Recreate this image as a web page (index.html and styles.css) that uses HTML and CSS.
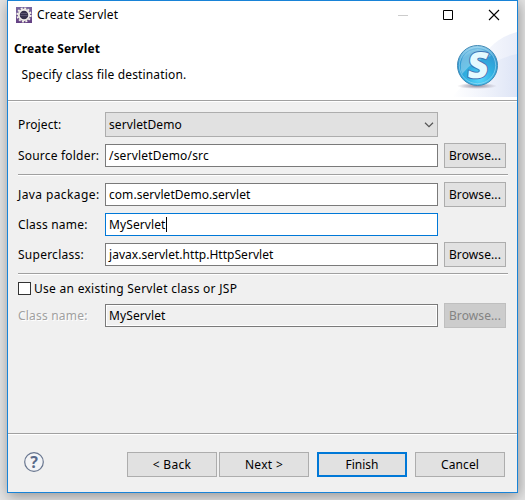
FILE: index.html
```html
<!DOCTYPE html>
<html lang="en">
<head>
<meta charset="utf-8">
<title>Create Servlet</title>
<link rel="stylesheet" href="styles.css">
</head>
<body>
<div class="dialog">
  <header class="header">
    <svg class="banner" width="72" height="68" viewBox="0 0 72 68">
      <defs>
        <linearGradient id="wave" x1="0" y1="0.5" x2="1" y2="0.5"><stop offset="0" stop-color="#fff"/><stop offset="1" stop-color="#e9edf9"/></linearGradient>
        <linearGradient id="wave2" x1="0" y1="0" x2="1" y2="0"><stop offset="0" stop-color="#fff"/><stop offset=".5" stop-color="#f0f3fb"/><stop offset="1" stop-color="#dee5f6"/></linearGradient>
        <radialGradient id="ball" cx=".55" cy=".82" r=".85"><stop offset="0" stop-color="#58d8fc"/><stop offset=".4" stop-color="#2fb0e2"/><stop offset=".75" stop-color="#3099d2"/><stop offset="1" stop-color="#b4e0f3"/></radialGradient>
        <radialGradient id="shade"><stop offset="0" stop-color="#938c9c"/><stop offset="1" stop-color="#938c9c" stop-opacity="0"/></radialGradient>
      </defs>
      <path d="M72 2C49 8 42 21 30 37L18 67H72Z" fill="url(#wave)"/>
      <path d="M72 24C48 29 29 43 7 67H72Z" fill="url(#wave2)"/>
      <ellipse cx="32" cy="56" rx="20" ry="3" fill="url(#shade)"/>
      <circle cx="32.5" cy="35.5" r="20" fill="url(#ball)" stroke="#4189b5"/>
      <circle cx="32.5" cy="35.5" r="18.2" fill="none" stroke="#a6dcf3" stroke-opacity=".6"/>
      <path d="M18 27A17 17 0 0 1 46 26Q29 29 17 44Q14 35 18 27Z" fill="#bce7f6" opacity=".45"/>
      <text class="logo-letter" transform="translate(32 48.4) skewX(-6)" text-anchor="middle">S</text>
    </svg>
    <div class="titlebar">
      <svg class="app-icon" width="16" height="16" viewBox="0 0 16 16">
        <defs><linearGradient id="app" x2="0" y2="1"><stop stop-color="#7968a0"/><stop offset="1" stop-color="#644083"/></linearGradient></defs>
        <path d="M0 0H16V16H0Z" fill="url(#app)"/>
        <circle cx="8" cy="8" r="6.7" fill="none" stroke="#f3f1e8" stroke-width="1.8" stroke-dasharray="2 1.508"/>
        <circle cx="8" cy="8" r="5.2" fill="#35304a" stroke="#efede6" stroke-width="1.9"/>
        <path d="M4.8 6.5H11.2M4.4 8.5H11.6" stroke="#5b5570"/>
      </svg>
      <span class="caption">Create Servlet</span>
      <svg class="controls" width="102" height="12" viewBox="0 0 102 12" fill="none">
        <path d="M0 6.5H10" stroke="#ccc"/>
        <path d="M45.5 1.5H54.5V10.5H45.5Z" stroke="#000"/>
        <path d="M91 1L101 11M101 1L91 11" stroke="#000" stroke-width="1.1"/>
      </svg>
    </div>
    <h1 class="title">Create Servlet</h1>
    <p class="subtitle">Specify class file destination.</p>
  </header>

  <main class="form">
    <div class="row combo-row">
      <label class="label l-project">Project:</label>
      <div class="field combo"><span class="v-demo">servletDemo</span>
        <svg width="10" height="6" viewBox="0 0 10 6" fill="none"><path d="M1 .8L5 4.7L9 .8" stroke="#555" stroke-width="1.2"/></svg>
      </div>
    </div>
    <div class="row source-row">
      <label class="label l-source">Source folder:</label>
      <div class="field"><span class="v-source">/servletDemo/src</span></div>
      <button class="button browse"><span>Browse...</span></button>
    </div>
    <div class="rule"></div>
    <div class="row package-row">
      <label class="label l-package">Java package:</label>
      <div class="field"><span class="v-package">com.servletDemo.servlet</span></div>
      <button class="button browse"><span>Browse...</span></button>
    </div>
    <div class="row class-row">
      <label class="label l-class">Class name:</label>
      <div class="field focused"><span class="v-class">MyServlet</span><i class="caret"></i></div>
    </div>
    <div class="row super-row">
      <label class="label l-super">Superclass:</label>
      <div class="field"><span class="v-super">javax.servlet.http.HttpServlet</span></div>
      <button class="button browse"><span>Browse...</span></button>
    </div>
    <div class="rule"></div>
    <div class="check-row"><i class="checkbox"></i><span class="check-label">Use an existing Servlet class or JSP</span></div>
    <div class="row existing-row">
      <label class="label l-class off">Class name:</label>
      <div class="field readonly"><span class="v-class">MyServlet</span></div>
      <button class="button browse disabled"><span>Browse...</span></button>
    </div>
  </main>

  <footer class="footer">
    <svg class="help" width="20" height="20" viewBox="0 0 20 20">
      <circle cx="10" cy="10" r="9.3" fill="#f3f4f6" stroke="#68768f" stroke-width="1.2"/>
      <text class="help-mark" x="10" y="16" text-anchor="middle">?</text>
    </svg>
    <button class="button action">&lt; Back</button>
    <button class="button action next">Next &gt;</button>
    <button class="button action primary">Finish</button>
    <button class="button action cancel">Cancel</button>
  </footer>
</div>
</body>
</html>
```
FILE: styles.css
```css
* { box-sizing: border-box; }
html { height: 500px; overflow: hidden; }
body {
  margin: 0; height: 500px; padding-left: 7px; overflow: hidden;
  background: #e4e4e4; color: #000;
  font: 12px/16px "Noto Sans", "Open Sans", sans-serif;
}
span, h1, p { white-space: nowrap; }
.dialog {
  width: 511px; height: 493px; display: flex; flex-direction: column;
  border: 1px solid #1883d7; background: #f0f0f0;
  box-shadow: 1px 3px 13px rgba(0, 0, 0, .36);
}
.header {
  position: relative; height: 101px; background: #fff;
  border-bottom: 1px solid #fff; box-shadow: inset 0 -1px #a0a0a0;
}
.banner { position: absolute; right: 0; top: 29px; }
.logo-letter { font: 800 36px "Open Sans", sans-serif; fill: #e4faff; stroke: #3f75b4; stroke-width: 2; stroke-linejoin: round; paint-order: stroke; }
.titlebar { position: relative; display: flex; align-items: center; height: 28px; padding: 0 17px 0 8px; }
.app-icon { margin-right: 5px; }
.caption { letter-spacing: .18px; }
.controls { margin-left: auto; }
.title { margin: 12px 0 0 6px; font-size: 12px; line-height: 16px; font-weight: 700; letter-spacing: .1px; }
.subtitle { margin: 10px 0 0 13.5px; letter-spacing: .15px; }
.form { flex: 1; padding: 10px 10px 0; }
.row { display: flex; align-items: center; height: 25px; }
.label { width: 87px; white-space: nowrap; }
.field {
  width: 333px; height: 23px; padding: 0 3px; display: flex; align-items: center;
  border: 1px solid #7a7a7a; background: #fff;
}
.combo { height: 25px; background: #e1e1e1; border-color: #adadad; justify-content: space-between; }
.focused { border-color: #0078d7; }
.readonly { background: #f0f0f0; box-shadow: inset 0 0 0 1px #fff; }
.caret { width: 1px; height: 15px; background: #000; }
.l-project { letter-spacing: .12px; }
.l-source { letter-spacing: .2px; }
.l-package { letter-spacing: .4px; }
.l-class { letter-spacing: .2px; }
.l-super { letter-spacing: .25px; }
.v-demo, .v-class { letter-spacing: .1px; }
.v-source { letter-spacing: .19px; }
.v-package { letter-spacing: .05px; }
.v-super { letter-spacing: .03px; }
.check-label { letter-spacing: .28px; }
.button {
  height: 25px; padding: 0; border: 1px solid #adadad; border-radius: 0;
  background: #e1e1e1; color: #000; font: inherit;
}
.browse { width: 62px; margin-left: 6px; letter-spacing: .1px; }
.disabled { background: #ccc; border-color: #bfbfbf; color: #838383; }
.off { color: #a0a0a0; text-shadow: 1px 1px #fff; }
.source-row { margin-top: 6px; }
.rule { height: 2px; margin: 6px -1px 0 0; background: linear-gradient(#a0a0a0 50%, #fff 50%); }
.package-row { margin-top: 6px; }
.class-row, .super-row { margin-top: 5px; }
.check-row { display: flex; align-items: center; height: 17px; margin-top: 5px; }
.checkbox { width: 13px; height: 13px; margin-right: 3px; border: 1px solid #333; background: #fff; }
.existing-row { margin-top: 6px; }
.footer {
  height: 59px; display: flex; padding: 18px 12px 0 16px;
  border-top: 1px solid #a0a0a0; box-shadow: inset 0 1px #fff;
}
.help { display: block; margin: 0 83px 0 0; }
.help-mark { font: bold 16px "Noto Sans", sans-serif; fill: #586a8a; }
.action { width: 90px; letter-spacing: .3px; }
.next { margin-left: 2px; }
.primary { margin-left: 8px; border: 2px solid #0078d7; letter-spacing: 0; }
.cancel { margin-left: 8px; letter-spacing: .1px; }
```
